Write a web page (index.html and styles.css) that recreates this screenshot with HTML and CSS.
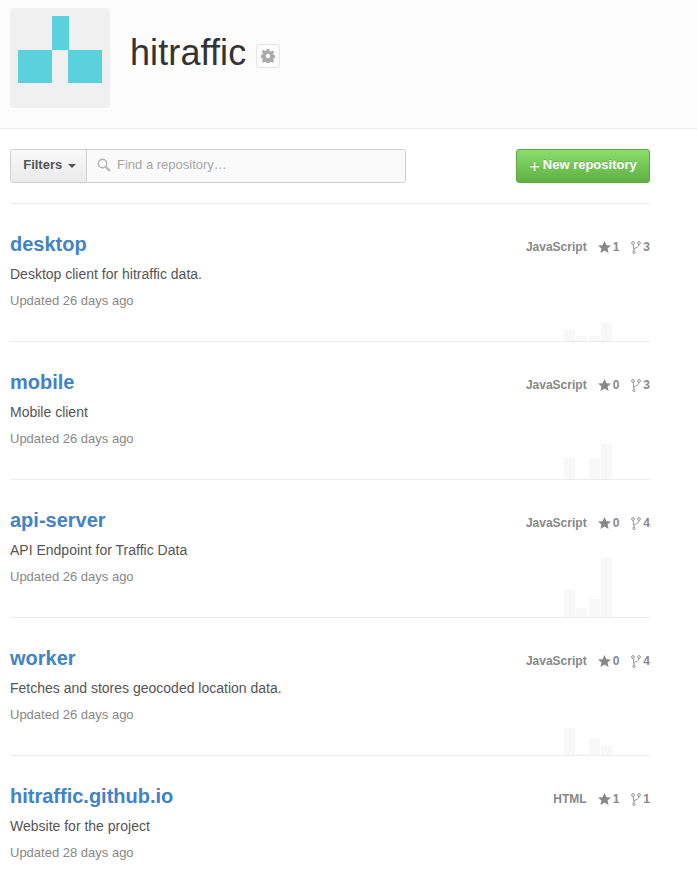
FILE: index.html
```html
<!DOCTYPE html>
<html lang="en">
<head>
<meta charset="utf-8">
<title>hitraffic</title>
<link rel="stylesheet" href="styles.css">
</head>
<body>
<header class="org-header">
  <div class="avatar">
    <svg class="avatar-logo" width="84" height="67" viewBox="0 0 84 67"><path class="logo-fill" d="M0 34h34v33H0zM50 34h34v33H50zM34 0h17v34H34z"/></svg>
  </div>
  <h1 class="org-name">hitraffic</h1>
  <a class="gear-btn"><svg width="14" height="14" viewBox="0 0 14 14"><path class="gear" fill-rule="evenodd" d="M5.8 0h2.4l.4 2 1.2.5 1.7-1.1 1.7 1.7-1.1 1.7.5 1.2 2 .4v2.4l-2 .4-.5 1.2 1.1 1.7-1.7 1.7-1.7-1.1-1.2.5-.4 2H5.8l-.4-2-1.2-.5-1.7 1.1-1.7-1.7 1.1-1.7-.5-1.2-2-.4V5.8l2-.4.5-1.2-1.1-1.7 1.7-1.7 1.7 1.1 1.2-.5zM7 4.8a2.2 2.2 0 1 0 0 4.4 2.2 2.2 0 0 0 0-4.4z"/></svg></a>
</header>
<main class="content">
  <div class="toolbar">
    <div class="search-group">
      <button class="filter-btn"><span class="filter-label">Filters <span class="caret"></span></span></button>
      <div class="search-field">
        <svg width="14" height="14" viewBox="0 0 14 14"><circle class="search-ring" cx="5.5" cy="5.5" r="4.2"/><path class="search-handle" d="M8.7 8.7L13 13"/></svg>
        <span class="placeholder">Find a repository…</span>
      </div>
    </div>
    <a class="new-btn"><span class="plus">+</span> New repository</a>
  </div>

  <ul class="repo-list">
    <li class="repo">
      <div class="repo-top"><a class="repo-name">desktop</a>
        <div class="repo-meta"><span class="lang">JavaScript</span>
          <span class="stat"><svg class="star" width="13" height="12" viewBox="0 0 14 13"><path d="M7 0l2.1 4.5 4.9.5-3.7 3.2 1.1 4.8L7 10.4 2.6 13l1.1-4.8L0 5l4.9-.5z"/></svg>1</span>
          <span class="stat"><svg class="fork" width="10" height="13" viewBox="0 0 10 13"><circle cx="2" cy="2" r="1.4"/><circle cx="8" cy="2" r="1.4"/><circle cx="3" cy="11.3" r="1.2"/><path d="M2.2 3.4L3 10M8 3.4C8 6.5 5 6.5 2.8 8"/></svg>3</span>
        </div>
      </div>
      <p class="repo-desc">Desktop client for hitraffic data.</p>
      <p class="repo-updated">Updated 26 days ago</p>
      <div class="spark"><i class="bar" style="height:12px"></i><i class="bar" style="height:5px"></i><i class="bar" style="height:5px"></i><i class="bar" style="height:19px"></i></div>
    </li>
    <li class="repo">
      <div class="repo-top"><a class="repo-name">mobile</a>
        <div class="repo-meta"><span class="lang">JavaScript</span>
          <span class="stat"><svg class="star" width="13" height="12" viewBox="0 0 14 13"><path d="M7 0l2.1 4.5 4.9.5-3.7 3.2 1.1 4.8L7 10.4 2.6 13l1.1-4.8L0 5l4.9-.5z"/></svg>0</span>
          <span class="stat"><svg class="fork" width="10" height="13" viewBox="0 0 10 13"><circle cx="2" cy="2" r="1.4"/><circle cx="8" cy="2" r="1.4"/><circle cx="3" cy="11.3" r="1.2"/><path d="M2.2 3.4L3 10M8 3.4C8 6.5 5 6.5 2.8 8"/></svg>3</span>
        </div>
      </div>
      <p class="repo-desc">Mobile client</p>
      <p class="repo-updated">Updated 26 days ago</p>
      <div class="spark"><i class="bar" style="height:22px"></i><i class="bar" style="height:0"></i><i class="bar" style="height:21px"></i><i class="bar" style="height:35px"></i></div>
    </li>
    <li class="repo">
      <div class="repo-top"><a class="repo-name">api-server</a>
        <div class="repo-meta"><span class="lang">JavaScript</span>
          <span class="stat"><svg class="star" width="13" height="12" viewBox="0 0 14 13"><path d="M7 0l2.1 4.5 4.9.5-3.7 3.2 1.1 4.8L7 10.4 2.6 13l1.1-4.8L0 5l4.9-.5z"/></svg>0</span>
          <span class="stat"><svg class="fork" width="10" height="13" viewBox="0 0 10 13"><circle cx="2" cy="2" r="1.4"/><circle cx="8" cy="2" r="1.4"/><circle cx="3" cy="11.3" r="1.2"/><path d="M2.2 3.4L3 10M8 3.4C8 6.5 5 6.5 2.8 8"/></svg>4</span>
        </div>
      </div>
      <p class="repo-desc">API Endpoint for Traffic Data</p>
      <p class="repo-updated">Updated 26 days ago</p>
      <div class="spark"><i class="bar" style="height:27px"></i><i class="bar" style="height:9px"></i><i class="bar" style="height:18px"></i><i class="bar" style="height:59px"></i></div>
    </li>
    <li class="repo">
      <div class="repo-top"><a class="repo-name">worker</a>
        <div class="repo-meta"><span class="lang">JavaScript</span>
          <span class="stat"><svg class="star" width="13" height="12" viewBox="0 0 14 13"><path d="M7 0l2.1 4.5 4.9.5-3.7 3.2 1.1 4.8L7 10.4 2.6 13l1.1-4.8L0 5l4.9-.5z"/></svg>0</span>
          <span class="stat"><svg class="fork" width="10" height="13" viewBox="0 0 10 13"><circle cx="2" cy="2" r="1.4"/><circle cx="8" cy="2" r="1.4"/><circle cx="3" cy="11.3" r="1.2"/><path d="M2.2 3.4L3 10M8 3.4C8 6.5 5 6.5 2.8 8"/></svg>4</span>
        </div>
      </div>
      <p class="repo-desc">Fetches and stores geocoded location data.</p>
      <p class="repo-updated">Updated 26 days ago</p>
      <div class="spark"><i class="bar" style="height:27px"></i><i class="bar" style="height:1px"></i><i class="bar" style="height:17px"></i><i class="bar" style="height:10px"></i></div>
    </li>
    <li class="repo">
      <div class="repo-top"><a class="repo-name">hitraffic.github.io</a>
        <div class="repo-meta"><span class="lang">HTML</span>
          <span class="stat"><svg class="star" width="13" height="12" viewBox="0 0 14 13"><path d="M7 0l2.1 4.5 4.9.5-3.7 3.2 1.1 4.8L7 10.4 2.6 13l1.1-4.8L0 5l4.9-.5z"/></svg>1</span>
          <span class="stat"><svg class="fork" width="10" height="13" viewBox="0 0 10 13"><circle cx="2" cy="2" r="1.4"/><circle cx="8" cy="2" r="1.4"/><circle cx="3" cy="11.3" r="1.2"/><path d="M2.2 3.4L3 10M8 3.4C8 6.5 5 6.5 2.8 8"/></svg>1</span>
        </div>
      </div>
      <p class="repo-desc">Website for the project</p>
      <p class="repo-updated">Updated 28 days ago</p>
    </li>
  </ul>
</main>
</body>
</html>
```

FILE: styles.css
```css
* { box-sizing: border-box; }
html, body { margin: 0; padding: 0; height: 873px; overflow: hidden; }
body { background: #fff; font-family: "Liberation Sans", Arial, sans-serif; color: #333; }

.org-header {
  display: flex;
  align-items: flex-start;
  height: 129px;
  padding: 8px 10px 0;
  background: #fcfcfc;
  border-bottom: 1px solid #ececec;
}
.avatar {
  width: 100px;
  height: 100px;
  padding-bottom: 17px;
  background: #f0f0f0;
  border-radius: 3px;
  display: flex;
  align-items: center;
  justify-content: center;
}
.logo-fill { fill: #5bd1dc; }
.org-name {
  margin: 23px 10px 0 20px;
  font-size: 36px;
  font-weight: 400;
  line-height: 44px;
  color: #333;
  letter-spacing: 0.1px;
}
.gear-btn {
  width: 24px;
  height: 24px;
  margin-top: 36px;
  display: flex;
  align-items: center;
  justify-content: center;
  background: #fcfcfc;
  border: 1px solid #e5e5e5;
  border-radius: 3px;
}
.gear { fill: #aaa; }

.content { width: 640px; margin-left: 10px; }
.toolbar {
  display: flex;
  justify-content: space-between;
  padding: 20px 0;
  border-bottom: 1px solid #ececec;
}
.search-group {
  display: flex;
  width: 396px;
  height: 34px;
  border: 1px solid #d0d0d0;
  border-radius: 3px;
}
.filter-btn {
  width: 76px;
  padding: 0 0 3px 2px;
  border: 0;
  border-right: 1px solid #d0d0d0;
  border-radius: 3px 0 0 3px;
  background: linear-gradient(#fafafa, #eaeaea);
  font: bold 13px "Liberation Sans", Arial, sans-serif;
  color: #555;
}
.caret {
  display: inline-block;
  margin-left: 2px;
  vertical-align: middle;
  border: 4px solid transparent;
  border-top-color: #555;
  border-bottom: 0;
}
.search-field {
  flex: 1;
  display: flex;
  align-items: center;
  gap: 6px;
  padding: 0 0 3px 10px;
  background: #fafafa;
  border-radius: 0 3px 3px 0;
}
.search-ring { fill: none; stroke: #b5b5b5; stroke-width: 1.4; }
.search-handle { fill: none; stroke: #b5b5b5; stroke-width: 2; }
.placeholder { font-size: 13px; color: #a5a5a5; }
.new-btn {
  width: 134px;
  height: 34px;
  padding-bottom: 3px;
  display: flex;
  align-items: center;
  justify-content: center;
  gap: 3px;
  border: 1px solid #5ca941;
  border-radius: 3px;
  background: linear-gradient(#8add6d, #60b044);
  color: #fff;
  font-size: 13px;
  font-weight: bold;
  text-shadow: 0 -1px 0 rgba(0, 0, 0, 0.15);
}
.plus { font-size: 18px; font-weight: 400; line-height: 18px; margin-top: 5px; }

.repo-list { list-style: none; margin: 0; padding: 0; }
.repo {
  position: relative;
  height: 138px;
  padding-top: 27px;
  border-bottom: 1px solid #ececec;
}
.repo-top { display: flex; justify-content: space-between; align-items: center; height: 26px; }
.repo-name { font-size: 20px; font-weight: bold; line-height: 26px; color: #4183c4; }
.repo-meta { display: flex; align-items: center; font-size: 12px; font-weight: bold; color: #888; margin-top: 6px; }
.lang { margin-right: 11px; }
.stat { display: flex; align-items: center; gap: 2px; }
.stat + .stat { margin-left: 12px; }
.star { fill: #888; }
.fork { fill: none; stroke: #999; stroke-width: 1; }
.repo-desc { margin: 7px 0 0; font-size: 14px; line-height: 20px; color: #555; }
.repo-updated { margin: 8px 0 0; font-size: 13px; line-height: 18px; color: #888; }
.spark {
  position: absolute;
  left: 554px;
  bottom: 0;
  display: flex;
  align-items: flex-end;
  gap: 1.33px;
}
.bar { display: block; width: 11px; background: #f8f8f8; }
```
